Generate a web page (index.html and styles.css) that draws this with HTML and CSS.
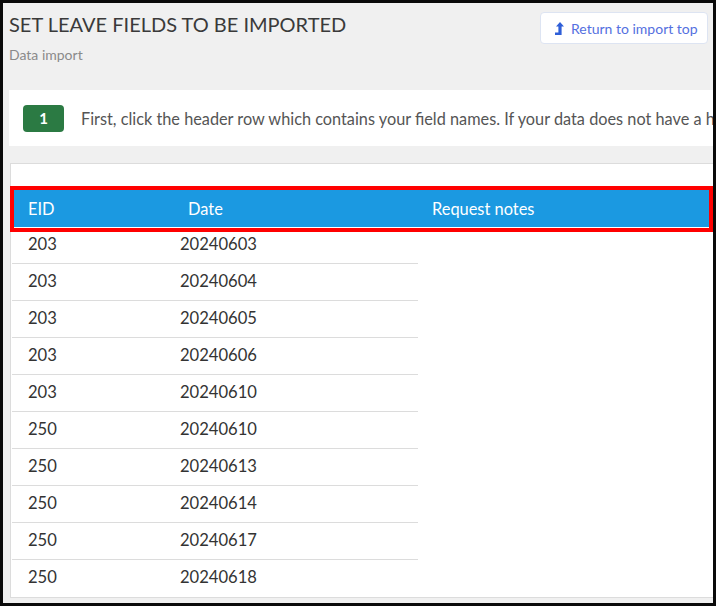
FILE: index.html
```html
<!DOCTYPE html>
<html>
<head>
<meta charset="utf-8">
<link rel="stylesheet" href="styles.css">
</head>
<body>
<div class="frame">
  <div class="head">
    <div class="titles">
      <h1 class="title">SET LEAVE FIELDS TO BE IMPORTED</h1>
      <div class="crumb">Data import</div>
    </div>
    <button class="return-btn">
      <svg class="return-icon" viewBox="0 0 10 13" width="10" height="13"><path d="M6 0 L10 4.6 L7.6 4.6 L7.6 13 L1 13 L1 10.6 L4.4 10.6 L4.4 4.6 L2 4.6 Z" fill="#2f5fd8"/></svg>
      <span>Return to import top</span>
    </button>
  </div>

  <div class="step">
    <span class="badge">1</span>
    <span class="step-text">First, click the header row which contains your field names. If your data does not have a header row, click the first row of data.</span>
  </div>

  <div class="grid-panel">
    <div class="hdr-row">
      <div class="hc hc-eid">EID</div>
      <div class="hc hc-date">Date</div>
      <div class="hc hc-notes">Request notes</div>
    </div>
    <div class="rows">
      <div class="row"><div class="c c-eid">203</div><div class="c c-date">20240603</div></div>
      <div class="row"><div class="c c-eid">203</div><div class="c c-date">20240604</div></div>
      <div class="row"><div class="c c-eid">203</div><div class="c c-date">20240605</div></div>
      <div class="row"><div class="c c-eid">203</div><div class="c c-date">20240606</div></div>
      <div class="row"><div class="c c-eid">203</div><div class="c c-date">20240610</div></div>
      <div class="row"><div class="c c-eid">250</div><div class="c c-date">20240610</div></div>
      <div class="row"><div class="c c-eid">250</div><div class="c c-date">20240613</div></div>
      <div class="row"><div class="c c-eid">250</div><div class="c c-date">20240614</div></div>
      <div class="row"><div class="c c-eid">250</div><div class="c c-date">20240617</div></div>
      <div class="row row-last"><div class="c c-eid">250</div><div class="c c-date">20240618</div></div>
    </div>
    <div class="highlight"></div>
  </div>
</div>
</body>
</html>
```
FILE: styles.css
```css
* { box-sizing: border-box; }
html, body { margin: 0; padding: 0; background: #fff; }
body { font-family: Lato, "Open Sans", "Liberation Sans", sans-serif; color: #333; }

.frame {
  width: 716px;
  height: 606px;
  border: 3px solid #0a0a0a;
  background: #f0f0f0;
  overflow: hidden;
}

.head {
  height: 87px;
  display: flex;
  justify-content: space-between;
  align-items: flex-start;
  padding: 8px 5px 0 6px;
}
.title {
  margin: 0;
  font-size: 20px;
  line-height: 26px;
  font-weight: 400;
  color: #3a3a3a;
  white-space: nowrap;
}
.crumb {
  margin-top: 9px;
  font-size: 14px;
  line-height: 17px;
  color: #8a8a8a;
}
.return-btn {
  margin-top: 1px;
  height: 32px;
  width: 168px;
  display: flex;
  align-items: center;
  gap: 7px;
  padding: 0 0 0 13px;
  background: #fff;
  border: 1px solid #dde4f2;
  border-radius: 4px;
  font-family: inherit;
  font-size: 14px;
  color: #5470e0;
  white-space: nowrap;
}
.return-icon { display: block; flex: none; }

.step {
  margin-left: 6px;
  width: 1200px;
  height: 56px;
  background: #fff;
  display: flex;
  align-items: center;
  padding-left: 14px;
  gap: 17px;
  white-space: nowrap;
}
.badge {
  width: 41px;
  height: 27px;
  border-radius: 4px;
  background: #2b7a43;
  color: #fff;
  font-weight: 700;
  font-size: 15px;
  display: flex;
  align-items: center;
  justify-content: center;
  flex: none;
}
.step-text {
  font-size: 16.3px;
  color: #555;
}

.grid-panel {
  position: relative;
  margin-top: 17px;
  margin-left: 7px;
  width: 1200px;
  background: #fff;
  border-top: 1px solid #dcdcdc;
  border-left: 1px solid #dcdcdc;
  border-bottom: 1px solid #dcdcdc;
  padding-top: 26px;
}
.hdr-row {
  display: flex;
  height: 37px;
  background: #1b99e1;
  color: #fff;
  font-size: 16.4px;
}
.hc {
  display: flex;
  align-items: center;
  padding-bottom: 1px;
}
.hc-eid { width: 151px; padding-left: 17px; }
.hc-date { width: 253px; padding-left: 26px; }
.hc-notes { padding-left: 17px; }

.rows { margin-left: 1px; width: 406px; }
.row {
  display: flex;
  height: 37px;
  border-bottom: 1px solid #dcdcdc;
  font-size: 16.6px;
  color: #333;
}
.row-last { border-bottom: none; }
.c {
  display: flex;
  align-items: center;
  padding-bottom: 3px;
}
.c-eid { width: 150px; padding-left: 16px; }
.c-date { padding-left: 18px; }

.highlight {
  position: absolute;
  top: 22px;
  left: -1px;
  width: 703px;
  height: 46px;
  border: 4px solid #ff0000;
  pointer-events: none;
}
```
